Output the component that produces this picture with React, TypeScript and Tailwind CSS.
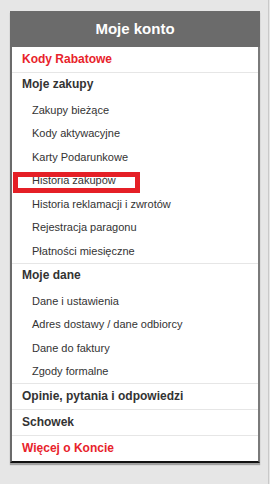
import React from "react";

const RED = "text-[#e8232b]";

type Section = { title: string; items: string[] };

const zakupy: Section = {
  title: "Moje zakupy",
  items: [
    "Zakupy bieżące",
    "Kody aktywacyjne",
    "Karty Podarunkowe",
    "Historia zakupów",
    "Historia reklamacji i zwrotów",
    "Rejestracja paragonu",
    "Płatności miesięczne",
  ],
};

const dane: Section = {
  title: "Moje dane",
  items: ["Dane i ustawienia", "Adres dostawy / dane odbiorcy", "Dane do faktury", "Zgody formalne"],
};

function TopRow({ label, red, last }: { label: string; red?: boolean; last?: boolean }) {
  return (
    <a
      href="#"
      className={`flex items-center pb-[2px] pl-[10px] text-[12px] font-bold ${red ? RED : "text-[#333]"} ${
        last ? "h-[25px]" : "h-[26px] border-b border-[#e6e6e6]"
      }`}
    >
      {label}
    </a>
  );
}

function MenuSection({ section, highlight, padBottom }: { section: Section; highlight?: string; padBottom: string }) {
  return (
    <div className={`border-b border-[#e6e6e6] ${padBottom}`}>
      <div className="flex h-[22px] items-center pl-[10px] text-[12px] font-bold text-[#333]">{section.title}</div>
      <ul className="mt-[3px]">
        {section.items.map((item) => (
          <li key={item} className="relative flex h-[23.5px] items-center pl-[20px] text-[11px] text-[#333]">
            {item}
            {/* annotation box */}
            {item === highlight && (
              <span className="pointer-events-none absolute left-[1px] top-[3px] h-[21px] w-[127px] border-[5px] border-[#e51f26]" />
            )}
          </li>
        ))}
      </ul>
    </div>
  );
}

export default function App() {
  return (
    <div className="flex min-h-[484px] w-[270px] bg-[#e6e6e6] font-['Liberation_Sans',Arial,sans-serif]">
      <div className="w-[268px] pl-[10px] pt-[11px]">
        <nav className="w-[250px] border-b-2 border-l-2 border-r-2 border-b-[#111] border-l-[#6b6b6b] border-r-[#7a7a7a] bg-white shadow-[0_2px_1px_rgba(0,0,0,0.3)]">
          <div className="-mx-[2px] flex h-[36px] items-center justify-center bg-[#6b6b6b] text-[15px] font-bold text-white">
            Moje konto
          </div>
          <TopRow label="Kody Rabatowe" red />
          <MenuSection section={zakupy} highlight="Historia zakupów" padBottom="pb-[0.5px]" />
          <MenuSection section={dane} padBottom="pb-0" />
          <TopRow label="Opinie, pytania i odpowiedzi" />
          <TopRow label="Schowek" />
          <TopRow label="Więcej o Koncie" red last />
        </nav>
      </div>
      <div className="w-px bg-[#c9c9c9]" />
    </div>
  );
}
